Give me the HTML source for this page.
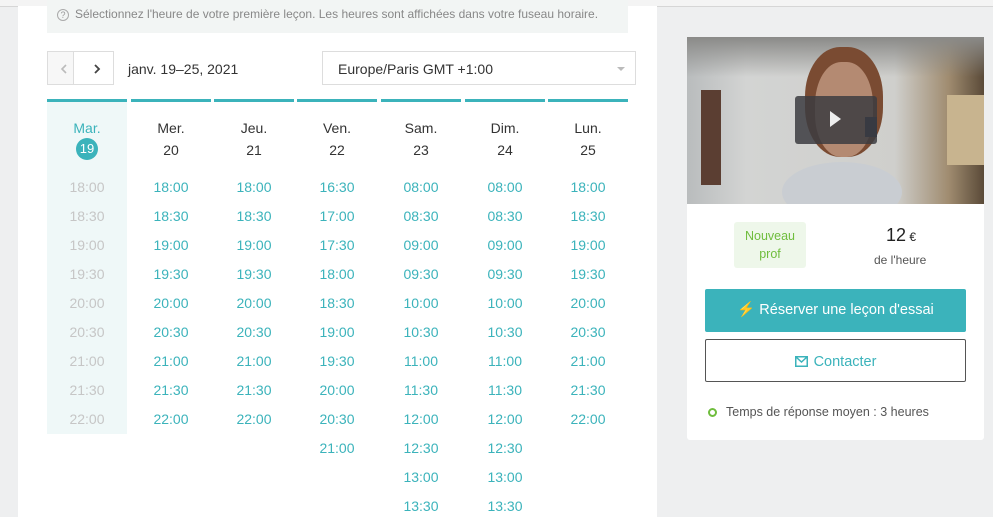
<!DOCTYPE html><html><head><meta charset="utf-8"><style>
*{margin:0;padding:0;box-sizing:border-box}
body{width:993px;height:517px;overflow:hidden;background:#eeeff0;font-family:"Liberation Sans",sans-serif;position:relative}
.a{position:absolute}
.panel{left:18px;top:6px;width:639px;height:511px;background:#fff}
.top{left:0;top:0;width:993px;height:7px;background:#f4f4f4;border-bottom:1px solid #d6d6d6}
.info{left:47px;top:0;width:581px;height:33px;background:#f2f5f4;font-size:12px;color:#888;padding:7px 0 0 10px}
.nav{left:47px;top:51px;width:67px;height:34px;border:1px solid #ddd;background:#fff}
.sel{left:322px;top:51px;width:314px;height:34px;border:1px solid #ddd;font-size:14px;color:#333;padding:9px 0 0 15px}
.col{width:80px;text-align:center}
.bar{height:3px;background:#3bb3bb}
.h{font-size:14px;color:#333}
.t{font-size:14px;color:#3bb3bb;position:absolute;width:80px;text-align:center}
.g{color:#c6c6c6}
.card{left:687px;top:37px;width:297px;height:403px;background:#fff;border-radius:3px}
</style></head><body>
<div class="a top"></div>
<div class="a panel"></div>
<div class="a info"><span style="display:inline-block;width:12px;height:12px;border:1px solid #aaa;border-radius:50%;font-size:9px;text-align:center;line-height:10px;margin-right:6px;color:#999">?</span>Sélectionnez l'heure de votre première leçon. Les heures sont affichées dans votre fuseau horaire.</div>
<div class="a nav"><div class="a" style="left:0;top:0;width:26px;height:32px;background:#f7f7f7;border-right:1px solid #ddd"></div>
<svg class="a" style="left:12px;top:12px" width="8" height="10"><path d="M6 1 L2 5 L6 9" fill="none" stroke="#bbb" stroke-width="1.6"/></svg>
<svg class="a" style="left:45px;top:12px" width="8" height="10"><path d="M2 1 L6 5 L2 9" fill="none" stroke="#444" stroke-width="1.8"/></svg></div>
<div class="a" style="left:128px;top:61px;font-size:14px;color:#333">janv. 19–25, 2021</div>
<div class="a sel">Europe/Paris GMT +1:00<div class="a" style="right:10px;top:15px;width:0;height:0;border-left:4px solid transparent;border-right:4px solid transparent;border-top:4px solid #bbb"></div></div>
<div class="a" style="left:47px;top:102px;width:80px;height:332px;background:#eff8f8"></div>
<div id="cols"></div>
<div class="a card">
<div class="a" style="left:0;top:0;width:297px;height:167px;overflow:hidden;background:linear-gradient(90deg,#b9bcbd 0%,#d3d4d3 20%,#cfcfcc 70%,#a08c70 88%,#5a4a38 100%)">
<div class="a" style="left:0;top:0;width:297px;height:40px;background:linear-gradient(#8a8a88,rgba(0,0,0,0))"></div>
<div class="a" style="left:95px;top:125px;width:120px;height:60px;border-radius:50%;background:#c9cdd2"></div>
<div class="a" style="left:118px;top:10px;width:78px;height:110px;border-radius:45%;background:#7a4b32"></div>
<div class="a" style="left:128px;top:25px;width:58px;height:95px;border-radius:45%;background:#b48a72"></div>
<div class="a" style="left:178px;top:80px;width:12px;height:20px;background:#23324a"></div>
<div class="a" style="left:260px;top:58px;width:37px;height:70px;background:#c8b48f"></div>
</div>
<div class="a" style="left:14px;top:53px;width:20px;height:95px;background:#5b3e32"></div>
<div class="a" style="left:108px;top:59px;width:82px;height:48px;background:rgba(60,60,65,.85);border-radius:3px"></div>
<div class="a" style="left:143px;top:74px;width:0;height:0;border-top:8px solid transparent;border-bottom:8px solid transparent;border-left:11px solid #eee"></div>
<div class="a" style="left:47px;top:185px;width:72px;height:46px;background:#eef7ea;border-radius:3px;color:#6fbd3d;font-size:12.5px;text-align:center;line-height:18px;padding-top:5px">Nouveau<br>prof</div>
<div class="a" style="left:199px;top:188px;font-size:18px;color:#222">12<span style="font-size:12px"> €</span></div>
<div class="a" style="left:187px;top:216px;font-size:12px;color:#555">de l'heure</div>
<div class="a" style="left:18px;top:252px;width:261px;height:43px;background:#3bb3bb;border-radius:2px;color:#fff;font-size:14.5px;text-align:center;line-height:43px"><span style="color:#f5c518">⚡</span> Réserver une leçon d'essai</div>
<div class="a" style="left:18px;top:302px;width:261px;height:43px;border:1px solid #555;border-radius:2px;color:#3bb3bb;font-size:14.5px;text-align:center;line-height:44px"><svg width="13" height="11" style="vertical-align:-1px;margin-right:6px"><rect x="0.75" y="0.75" width="11.5" height="9.5" fill="none" stroke="#3bb3bb" stroke-width="1.5"/><path d="M1 1 L6.5 6 L12 1" fill="none" stroke="#3bb3bb" stroke-width="1.5"/></svg>Contacter</div>
<div class="a" style="left:21px;top:371px;width:9px;height:9px;border:2px solid #6fbd3d;border-radius:50%"></div>
<div class="a" style="left:39px;top:368px;font-size:12.5px;color:#555">Temps de réponse moyen : 3 heures</div>
</div>
<script>
var days=[["Mar.","19"],["Mer.","20"],["Jeu.","21"],["Ven.","22"],["Sam.","23"],["Dim.","24"],["Lun.","25"]];
var xs=[47,131,214,297,381,465,548];
var base=["18:00","18:30","19:00","19:30","20:00","20:30","21:00","21:30","22:00"];
var times=[base,base,base,["16:30","17:00","17:30","18:00","18:30","19:00","19:30","20:00","20:30","21:00"],
["08:00","08:30","09:00","09:30","10:00","10:30","11:00","11:30","12:00","12:30","13:00","13:30"],
["08:00","08:30","09:00","09:30","10:00","10:30","11:00","11:30","12:00","12:30","13:00","13:30"],base];
var h="";
for(var i=0;i<7;i++){var x=xs[i];
h+='<div class="a bar" style="left:'+x+'px;top:99px;width:80px"></div>';
h+='<div class="a col h" style="left:'+x+'px;top:120px;'+(i==0?'color:#3bb3bb':'')+'">'+days[i][0]+'</div>';
if(i==0)h+='<div class="a" style="left:76px;top:138px;width:22px;height:22px;border-radius:50%;background:#3bb3bb;color:#fff;font-size:13px;text-align:center;line-height:22px">19</div>';
else h+='<div class="a col h" style="left:'+x+'px;top:142px">'+days[i][1]+'</div>';
for(var j=0;j<times[i].length;j++)h+='<div class="t'+(i==0?' g':'')+'" style="left:'+x+'px;top:'+(179+29*j)+'px">'+times[i][j]+'</div>';}
document.getElementById("cols").innerHTML=h;
</script>
</body></html>
